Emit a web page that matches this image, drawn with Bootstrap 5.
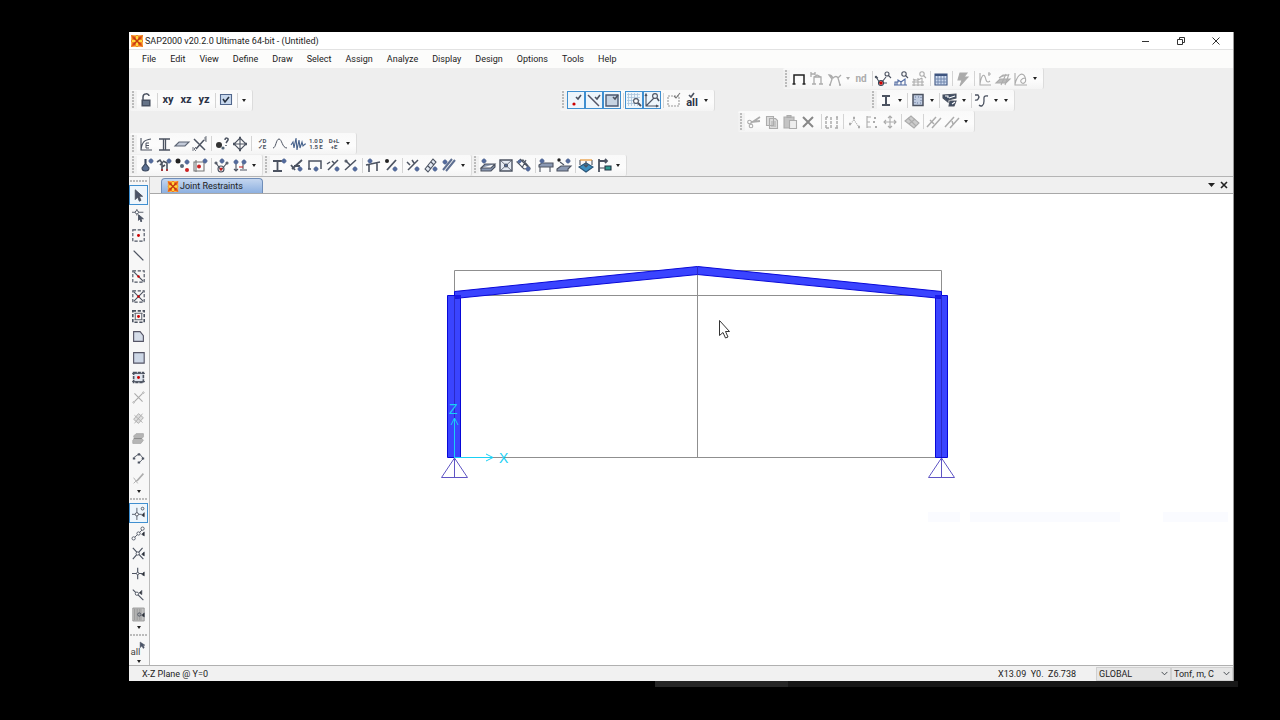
<!DOCTYPE html>
<html lang="en">
<head>
<meta charset="utf-8">
<meta name="viewport" content="width=device-width, initial-scale=1">
<title>SAP2000 v20.2.0 Ultimate 64-bit - (Untitled)</title>
<link href="https://cdn.jsdelivr.net/npm/bootstrap@5.3.0/dist/css/bootstrap.min.css" rel="stylesheet">
<script src="https://cdn.jsdelivr.net/npm/bootstrap@5.3.0/dist/js/bootstrap.bundle.min.js" defer></script>
<style>
  body { background:#000; color:#222; font:9px/16px Roboto, "Liberation Sans", sans-serif; }
  .desk { padding:32px 46px 39px 129px; }
  .app-window { background:#eee; border-right:1px solid #999; }
  .title-bar { height:18px; background:#fff; border-bottom:1px solid #e2e2e2; padding-left:2px; }
  .title-text { margin-left:2px; }
  .caption-btn { width:35px; height:17px; }
  .menu-strip { height:18px; background:#fcfcfb; padding-left:13px; gap:14px; }
  .menu-strip a { color:#222; text-decoration:none; }
  .tool-area { height:108px; background:#eee; }
  .strip { height:21px; padding-right:3px; background:linear-gradient(#f9f9f9,#fcfcfc 60%,#f4f4f4); border-right:1px solid #dcdcdc; border-radius:2px; }
  .strip button, .side button, .plain-btn { border:0; padding:0; background:none; color:#4c5361; }
  .strip button { width:18px; height:18px; display:flex; align-items:center; justify-content:center; border:1px solid transparent; flex:none; }
  .strip button.on, .side button.on { border:1px solid #3f8fd0; background:#eef6fc; }
  .strip button.more { width:10px; color:#222; }
  .strip button.thin { width:8px; }
  .strip button:disabled, .side button:disabled { color:#acacac; }
  .strip svg, .side svg { width:16px; height:16px; flex:none; overflow:visible; fill:none; stroke:currentColor; stroke-width:1.1; }
  .strip .more svg, .side .more svg { width:4px; height:3px; fill:currentColor; stroke:none; }
  .grip { width:7px; height:18px; flex:none; background:radial-gradient(circle at 2px 1px,#bbb 1px,transparent 1px) 1px 0/4px 3px repeat-y #f1f1f1; }
  .rule { width:1px; height:15px; margin:0 1px 0 2px; background:#d4d4d4; flex:none; }
  .strip .word { font:bold 11px/14px Roboto, sans-serif; color:#2c3346; }
  .strip .nd-text { font-size:10px; color:#999; }
  .mini { font:bold 6px/6px Roboto, sans-serif; }
  .check-over { height:5px !important; }
  .tiny-all { font:bold 11px/9px Roboto, sans-serif; color:#2c3346; }
  .r1 { margin-left:654px; } .r2a, .left-strip { margin-left:1px; } .r2b { margin-left:307px; } .r2c { margin-left:155px; } .r3 { margin-left:609px; }
  .work { border-top:1px solid #b4b4b4; }
  .side { width:21px; background:#f7f7f7; border-right:1px solid #bbb; }
  .side button { flex:1 1 0; min-height:0; width:19px; display:flex; align-items:center; justify-content:center; border:1px solid transparent; }
  .side button.more { flex:none; height:6px; color:#222; }
  .side svg { width:13px; height:13px; }
  .grip-h { height:8px; width:19px; flex:none; background:radial-gradient(circle at 1px 1px,#bbb 1px,transparent 1px) 1px 3px/3px 4px repeat-x; }
  .tab-row { height:17px; background:#f0f0f0; border-bottom:1px solid #a8a8a8; padding:0 5px 0 11px; gap:5px; }
  .doc-tab { width:102px; height:15px; padding:0 0 0 5px; border:1px solid #6f8db8; border-bottom:0; border-radius:4px 4px 0 0; background:linear-gradient(#c4d6ef,#8db0e0); color:#222; gap:1px; line-height:14px; }
  .canvas { min-height:0; background:#fff; }
  .canvas svg { width:100%; height:100%; display:block; }
  .status-strip { height:16px; background:#f1f1f1; border-top:1px solid #b0b0b0; padding-left:13px; }
  .status-strip .form-select { height:14px; padding:0 12px 0 2px; border:1px solid #d0d0d0; border-radius:0; font-size:9px; line-height:12px; color:#222; background-color:#e6e6e6; background-position:right 2px center; background-size:7px 7px; }
  .sel-sys { width:75px; } .sel-unit { width:62px; }
  .coords { margin-right:20px; white-space:pre; }
  .under-wrap { height:0; }
  .under { height:6px; margin:0 -4px 0 526px; background:linear-gradient(90deg,#262626 133px,#171717 133px); }
</style>
</head>
<body>
<svg class="d-none" aria-hidden="true">
  <symbol id="dn" viewBox="0 0 4 3"><path d="M0 0h4L2 3z"/></symbol>
  <symbol id="jt" viewBox="0 0 6 6"><path d="M3 0v6M0 3h6" stroke="#7c879c" stroke-width=".8"/><circle cx="3" cy="3" r="2.200" fill="#546b9c" stroke="none"/></symbol>
  <symbol id="logo" viewBox="0 0 12 12"><path fill="#fbb545" d="M0 0h12v12H0z"/><path fill="#e85f1c" d="M0 0l4 1.500L6 0l2 1.500L12 0l-1.500 4L12 6l-1.500 2 1.500 4-4-1.500L6 12l-2-1.500L0 12l1.500-4L0 6l1.500-2z"/><path stroke="#ffd93b" stroke-width="2.500" d="M6 1v10M1 6h10"/><path stroke="#c43a10" stroke-width="1.500" d="M2.500 2.500l7 7M9.500 2.500l-7 7"/></symbol>
</svg>

<div class="desk vh-100 d-flex flex-column">
<main class="app-window flex-grow-1 d-flex flex-column">
  <header class="title-bar d-flex align-items-center">
    <svg width="12" height="12" aria-hidden="true"><use href="#logo"/></svg>
    <span class="title-text me-auto">SAP2000 v20.2.0 Ultimate 64-bit - (Untitled)</span>
    <button class="plain-btn caption-btn" aria-label="Minimize"><svg width="8" height="8" stroke="#333"><path d="M0 4.500h7"/></svg></button>
    <button class="plain-btn caption-btn" aria-label="Restore"><svg width="8" height="8" fill="none" stroke="#333"><path d="M.5 2.500h5v5h-5zM2.500 2.500v-2h5v5h-2"/></svg></button>
    <button class="plain-btn caption-btn" aria-label="Close"><svg width="8" height="8" stroke="#333"><path d="M.5.5l7 7M7.500.5l-7 7"/></svg></button>
  </header>
  <nav class="menu-strip d-flex align-items-center" aria-label="Main menu">
    <a href="#">File</a><a href="#">Edit</a><a href="#">View</a><a href="#">Define</a><a href="#">Draw</a><a href="#">Select</a><a href="#">Assign</a><a href="#">Analyze</a><a href="#">Display</a><a href="#">Design</a><a href="#">Options</a><a href="#">Tools</a><a href="#">Help</a>
  </nav>

  <section class="tool-area d-flex flex-column" aria-label="Toolbars">
    <div class="flex-fill d-flex align-items-center">
      <div class="strip r1 d-flex align-items-center" role="toolbar" aria-label="Display">
        <span class="grip"></span>
        <button aria-label="Undeformed shape"><svg><path stroke="#222" stroke-width="1.500" d="M3 13V4h10v9M1.500 13h3M11.500 13h3"/></svg></button>
        <button disabled aria-label="Loads"><svg><path stroke-width="1.300" d="M5 13V6h7v7M3 13h4M10 13h4M2 1v5M2 3h4M6 1v3M5 6l3-2 4 2"/></svg></button>
        <button disabled aria-label="Deformed shape"><svg><path stroke-width="1.300" d="M3 14l2-6-3-4c2 0 3 1 4 3 2-2 4-2 5 0l3-3M11 7l2 7M2 14h2M12 14h2"/></svg></button>
        <button class="more thin" disabled aria-label="Shape options"><svg><use href="#dn"/></svg></button>
        <button disabled class="word nd-text">nd</button>
        <span class="rule"></span>
        <button aria-label="Joint reactions"><svg><path d="M1 6l4 6M11 6l-4 5M1 6l2 1M9 12h3"/><circle cx="6" cy="12" r="2.500" stroke="#345"/><circle cx="6" cy="12" r="1.200" fill="#c00" stroke="#c00"/><circle cx="12" cy="3" r="2"/><path d="M13.500 4.500L16 7"/><circle cx="1" cy="6" r=".7"/></svg></button>
        <button aria-label="Frame forces"><svg><path stroke="#4f69a0" d="M1 14h13M2 14v-3h3V9l3 2 4-3v6M4 11v3M8 11v3"/><circle cx="11" cy="3" r="2.200"/><path d="M12.500 4.500L15 7"/></svg></button>
        <button disabled aria-label="Shell forces"><svg><path d="M1 14h12M1 11h12M3 8v7M7 7v8M11 7v8M2 8c3 2 6 1 9-1"/><circle cx="11" cy="3" r="2.200"/><path d="M12.500 4.500L15 7"/></svg></button>
        <span class="rule"></span>
        <button aria-label="Tables"><svg><path fill="#cfdcf0" stroke="#3f5580" d="M2 3h12v11H2z"/><path fill="#3f5580" stroke="none" d="M2 3h12v2H2z"/><path stroke="#7086ad" stroke-width="1" d="M5 5v9M8 5v9M11 5v9M2 8h12M2 11h12"/></svg></button>
        <span class="rule"></span>
        <button disabled aria-label="Run"><svg><path fill="#aaa" d="M5 2h7L9 6h4l-8 9 2-6H3z"/></svg></button>
        <span class="rule"></span>
        <button disabled aria-label="Hinge results"><svg><path d="M3 2v12h11M3 13c2-12 5-10 6-4 1 3 3 2 4 1M11 3h3M12 1v4"/></svg></button>
        <button disabled aria-label="Response"><svg><path fill="#bbb" d="M1 12l4-4h10l-4 4zM4 7l4-3h6M6 14l5-11M10 14l4-11"/></svg></button>
        <button disabled aria-label="Function plot"><svg><path d="M2 2v12h12M2 13c3-11 8-12 10-7 2 5-1 7-3 6-3-2 0-5 3-5"/></svg></button>
        <button class="more" aria-label="More display tools"><svg><use href="#dn"/></svg></button>
      </div>
    </div>

    <div class="flex-fill d-flex align-items-center">
      <div class="strip r2a d-flex align-items-center" role="toolbar" aria-label="View">
        <span class="grip"></span>
        <button aria-label="Unlock model"><svg><path fill="#3f4d63" d="M4 8h8v6H4z"/><path stroke-width="1.500" d="M5 8V5c0-4 6-4 6-1"/><path stroke="#9fabbd" stroke-width=".8" d="M5 10h6M5 12h6"/></svg></button>
        <span class="rule"></span>
        <button class="word">xy</button><button class="word">xz</button><button class="word">yz</button>
        <span class="rule"></span>
        <button aria-label="Set display options"><svg><path fill="#c9d9ee" stroke="#50668c" d="M2.500 2.500h11v10h-11z"/><path stroke="#26303f" stroke-width="1.600" d="M5 7l2 3 4-5"/></svg></button>
        <span class="rule"></span>
        <button class="more" aria-label="More views"><svg><use href="#dn"/></svg></button>
      </div>
      <div class="strip r2b d-flex align-items-center" role="toolbar" aria-label="Snap and visibility">
        <span class="grip"></span>
        <button class="on" aria-label="Show joints"><svg><circle cx="6" cy="12" r="1.600" fill="#c00" stroke="none"/><path stroke-width="1.600" d="M8 5l2 2 3-4"/></svg></button>
        <button class="on" aria-label="Show frames"><svg><path stroke="#556" stroke-width="1.500" d="M2 3l11 11"/><path stroke-width="1.600" d="M9 5l2 2 3-4"/></svg></button>
        <button class="on" aria-label="Show shells"><svg><path fill="#c6d3e2" stroke="#4c5a72" stroke-width="1.400" d="M2 3h12v11H2z"/><path stroke-width="1.600" d="M9 5l2 2 3-4"/></svg></button>
        <span class="rule"></span>
        <button class="on" aria-label="Show grid"><svg><path stroke="#a9c4da" stroke-width=".8" d="M1 2.500h13M1 5.500h13M1 8.500h13M1 11.500h13M2.500 1v13M5.500 1v13M8.500 1v13M11.500 1v13"/><circle cx="10" cy="9" r="2.400" fill="#fff"/><path stroke-width="1.800" d="M12 11l3 3"/></svg></button>
        <button class="on" aria-label="Show axes"><svg><path d="M2 3v11h12M2 14l8-8M1 4l1-2 1 2M12 13l2 1-2 1"/><circle cx="11" cy="4" r="2.400"/><path stroke-width="1.600" d="M13 6l2 3"/></svg></button>
        <span class="rule"></span>
        <button aria-label="Show selection only"><svg><path stroke="#999" stroke-dasharray="2 1" d="M2 4h11v10H2z"/><path stroke="#777" d="M8 4l2 2 4-5"/></svg></button>
        <button class="flex-column" aria-label="Show all"><svg class="check-over"><path stroke-width="1.600" d="M5 2l2 2 3-4"/></svg><span class="tiny-all">all</span></button>
        <button class="more" aria-label="More visibility tools"><svg><use href="#dn"/></svg></button>
      </div>
      <div class="strip r2c d-flex align-items-center" role="toolbar" aria-label="Design">
        <span class="grip"></span>
        <button aria-label="Steel frame design"><svg><path stroke-width="2" d="M4 4h8M4 13h8M8 4v9"/></svg></button>
        <button class="more" aria-label="Steel options"><svg><use href="#dn"/></svg></button><span class="rule"></span>
        <button aria-label="Concrete frame design"><svg><path fill="#bfcbe0" stroke-width="1.500" d="M3 2.500h10v11H3z"/><path stroke="#6d7f9f" stroke-dasharray="1 2" d="M5 5h6v6H5z"/></svg></button>
        <button class="more" aria-label="Concrete options"><svg><use href="#dn"/></svg></button><span class="rule"></span>
        <button aria-label="Section design"><svg><path fill="#3f4d63" d="M1 3l13-1v4L6 8v2L1 6zM8 9h6l-2 5H7z"/><path stroke="#fff" d="M3 4h3v2M7 6l6-2M10 12l3-2"/></svg></button>
        <button class="more" aria-label="Section options"><svg><use href="#dn"/></svg></button><span class="rule"></span>
        <button aria-label="Cold-formed design"><svg><path stroke-width="1.300" d="M1 3h3c2 2 0 6-3 5M14 4c-5-1-4 2-4 5 0 5-3 6-5 4"/></svg></button>
        <button class="more" aria-label="Cold-formed options"><svg><use href="#dn"/></svg></button>
        <button class="more" aria-label="More design tools"><svg><use href="#dn"/></svg></button>
      </div>
    </div>

    <div class="flex-fill d-flex align-items-center">
      <div class="strip r3 d-flex align-items-center" role="toolbar" aria-label="Edit">
        <span class="grip"></span>
        <button disabled aria-label="Cut"><svg><path stroke-width="1.800" d="M14 3L5 9M14 7L5 8"/><circle cx="3.500" cy="8" r="1.800"/><circle cx="5" cy="12" r="1.800"/></svg></button>
        <button disabled aria-label="Copy"><svg><path fill="#ddd" d="M2.500 2.500h7v9h-7zM5.500 4.500h6l2 2v8h-8z"/><path d="M7 8h5M7 10h5M7 12h5"/></svg></button>
        <button disabled aria-label="Paste"><svg><path fill="#c4c4c4" d="M2 3h10v11H2zM5 1.500h4v2H5z"/><path fill="#eee" d="M7.500 6.500h7v8h-7z"/></svg></button>
        <button disabled aria-label="Delete"><svg><path stroke="#888" stroke-width="2" d="M3 3l10 10M13 3L3 13"/></svg></button>
        <span class="rule ms-1"></span>
        <button disabled aria-label="Replicate"><svg><path stroke-width="1.500" stroke-dasharray="3 1" d="M2 3v11M7 3v11M13 3v11M2 3h2M12 3h2M2 14h3M11 14h3"/></svg></button>
        <span class="rule"></span>
        <button disabled aria-label="Merge joints"><svg><path stroke-width="2.500" d="M7 4h2M3 10h2M12 13h2"/><path stroke-dasharray="1 1" d="M5 10l3-5M8 6l5 7"/></svg></button>
        <button disabled aria-label="Align joints"><svg><path d="M3 2v12M3 3h4M3 8h3M3 13h4"/><path stroke-width="2" d="M10 4h2M9 8h2M11 13h2"/></svg></button>
        <button disabled aria-label="Move"><svg><path d="M8 2v12M2 8h12M6 4l2-2 2 2M6 12l2 2 2-2M4 6L2 8l2 2M12 6l2 2-2 2"/></svg></button>
        <span class="rule"></span>
        <button disabled aria-label="Divide areas"><svg><path fill="#ccc" d="M1 7l6-5 8 7-5 5z"/><path d="M4 4l8 8M5 10l6-5"/></svg></button>
        <span class="rule"></span>
        <button disabled aria-label="Divide frames"><svg><path stroke-width="1.500" d="M1 13L10 3M6 14l9-10M4 6l4 4"/></svg></button>
        <button disabled aria-label="Join frames"><svg><path stroke-width="1.500" d="M1 13L10 3M6 14l9-10M8 7l1 3"/></svg></button>
        <button class="more" aria-label="More edit tools"><svg><use href="#dn"/></svg></button>
      </div>
    </div>

    <div class="flex-fill d-flex align-items-center">
      <div class="strip left-strip d-flex align-items-center" role="toolbar" aria-label="Define">
        <span class="grip"></span>
        <button aria-label="Materials"><svg><path d="M3 2v12h11M3 14C4 6 6 4 13 3"/><path stroke-width="1" d="M11 7H8v5h3M8 9.500h3"/></svg></button>
        <button aria-label="Frame sections"><svg><path fill="#c9d3e2" stroke-width="1.300" d="M3 3h11M3 14h11M7.500 3v11M9.500 3v11"/></svg></button>
        <button aria-label="Area sections"><svg><path fill="#c3cad8" stroke="#5d6574" d="M1 10l4-4h10l-4 4z"/></svg></button>
        <button aria-label="Link properties"><svg><path stroke-width="1.500" d="M2 3l11 11M12 4L4 13"/><path stroke-width=".8" d="M15 1h-2v4h2M13 3h2M1 11v4M4 11l-2 2 2 2"/></svg></button>
        <span class="rule"></span>
        <button aria-label="Groups"><svg><circle cx="5" cy="9" r="3" fill="#333" stroke="none"/><circle cx="9" cy="12" r="1.600" fill="#567" stroke="none"/><path stroke-width="1.500" d="M11 4c0-3 4-2 3 0l-2 3M12 9v1"/></svg></button>
        <button aria-label="Constraints"><svg><path d="M8 2l6 6-6 6-6-6zM8 2v12M2 8h12"/><path stroke-width="2.600" d="M7 2h2M7 14h2M1 8h2M13 8h2"/></svg></button>
        <span class="rule"></span>
        <button class="mini" aria-label="Load patterns">✓D<br>✓E</button>
        <button aria-label="Functions"><svg><path stroke-width="1" d="M1 12c3 0 3-9 6-9s3 9 8 9"/></svg></button>
        <button aria-label="Time history"><svg><path stroke="#47628c" d="M1 9l2-3 1 6 2-10 1 12 2-10 1 8 2-6 1 4 2-2h1"/></svg></button>
        <button class="mini" aria-label="Load cases">1.0 D<br>1.5 E</button>
        <button class="mini" aria-label="Load combinations">D+L<br>+E</button>
        <button class="more" aria-label="More define tools"><svg><use href="#dn"/></svg></button>
      </div>
    </div>

    <div class="flex-fill d-flex align-items-center">
      <div class="strip left-strip d-flex align-items-center" role="toolbar" aria-label="Assign joint">
        <span class="grip"></span>
        <button aria-label="Joint restraints"><svg><path fill="#5a6f92" stroke="#39465c" d="M7 2v5L4 11c0 4 7 4 7 0L8 7V2"/><use href="#jt" x="10" y="1" width="6" height="6"/></svg></button>
        <button aria-label="Joint springs"><svg><path stroke-width="1.600" d="M1 5l3-2 2 3v8M7 4l4 2v8M4 8l3-3M6 10l3-2"/><path stroke="#c00" d="M6 12v2M11 12v2"/><use href="#jt" x="10" y="1" width="6" height="6"/></svg></button>
        <button aria-label="Joint panel zones"><svg><circle cx="4" cy="4" r="2.500" fill="#222" stroke="none"/><circle cx="8" cy="9" r="2" fill="#567" stroke="none"/><circle cx="13" cy="13" r="2" fill="#c22" stroke="none"/><use href="#jt" x="10" y="2" width="6" height="6"/></svg></button>
        <button aria-label="Joint masses"><svg><path stroke="#777" d="M2 5h10v9H2zM4 3v12"/><circle cx="7" cy="9.500" r="2" fill="#c22" stroke="none"/><use href="#jt" x="10" y="1" width="6" height="6"/></svg></button>
        <span class="rule"></span>
        <button aria-label="Joint loads"><svg><path d="M2 6l5 7 6-7"/><circle cx="7" cy="12" r="3"/><circle cx="7" cy="12" r="1.500" fill="#c22" stroke="none"/><circle cx="2" cy="6" r="1"/><circle cx="13" cy="6" r="1"/><use href="#jt" x="5" y="1" width="6" height="6"/></svg></button>
        <button aria-label="Joint displacements"><svg><path d="M4 5v9M2 12l2 2 2-2M11 6v6M8 13h7"/><path stroke="#c22" d="M7 10h4"/><use href="#jt" x="1" y="2" width="6" height="6"/><use href="#jt" x="9" y="2" width="6" height="6"/></svg></button>
        <button class="more" aria-label="More joint tools"><svg><use href="#dn"/></svg></button>
      </div>
      <div class="strip d-flex align-items-center" role="toolbar" aria-label="Assign frame">
        <span class="grip"></span>
        <button aria-label="Frame section"><svg><path stroke-width="1.800" d="M2 4h9M2 14h9M6.500 4v10"/><use href="#jt" x="10" y="1" width="6" height="6"/></svg></button>
        <button aria-label="Property modifiers"><svg><path stroke-width="1.800" d="M3 12l10-9M2 8l4 5M5 9h6"/><use href="#jt" x="8" y="9" width="6" height="6"/></svg></button>
        <button aria-label="Frame releases"><svg><path stroke-width="1.500" d="M2 12V4h12v8M1 12h3"/><use href="#jt" x="6" y="9" width="6" height="6"/></svg></button>
        <button aria-label="Local axes"><svg><path stroke-width="1.500" d="M3 13L13 3M2 7l3-2M7 4l3 3"/><use href="#jt" x="9" y="9" width="6" height="6"/></svg></button>
        <button aria-label="End offsets"><svg><path stroke-width="1.500" d="M2 13L13 3M3 4l4 4"/><circle cx="3" cy="4" r="1"/><use href="#jt" x="9" y="9" width="6" height="6"/></svg></button>
        <span class="rule"></span>
        <button aria-label="Frame loads"><svg><path stroke-width="1.600" d="M1 8l14-3M4 7v8M12 6v8"/><use href="#jt" x="2" y="1" width="6" height="6"/></svg></button>
        <button aria-label="Insertion point"><svg><path stroke-width="1.800" d="M4 13l9-10"/><circle cx="4" cy="4" r="2" fill="#222" stroke="none"/><use href="#jt" x="9" y="9" width="6" height="6"/></svg></button>
        <span class="rule"></span>
        <button aria-label="Output stations"><svg><path stroke-width="1.500" d="M3 13L13 3M2 5l3 3M7 3l2 3"/><use href="#jt" x="9" y="9" width="6" height="6"/></svg></button>
        <button aria-label="Distributed loads"><svg><path fill="#e3e9f2" d="M2 12l8-10 3 3-8 10zM5 9l3 3M8 5l3 3"/><use href="#jt" x="9" y="9" width="6" height="6"/></svg></button>
        <button aria-label="Frame temperature"><svg><path stroke="#5f7092" stroke-width="2" d="M2 13L11 2M5 14L14 3"/><use href="#jt" x="1" y="2" width="6" height="6"/></svg></button>
        <button class="more" aria-label="More frame tools"><svg><use href="#dn"/></svg></button>
      </div>
      <div class="strip d-flex align-items-center" role="toolbar" aria-label="Assign area">
        <span class="grip"></span>
        <button aria-label="Area section"><svg><path fill="#8a98b2" d="M1 11l4-4h10l-4 4zM1 11v3h10l4-4V7"/><use href="#jt" x="1" y="1" width="6" height="6"/></svg></button>
        <button aria-label="Area mesh"><svg><path fill="#e6ebf3" stroke-width="1.400" d="M2 3h12v11H2z"/><path stroke-width=".8" d="M2 3l12 11M14 3L2 14"/><circle cx="8" cy="8.500" r="1.500" fill="#4f69a0"/></svg></button>
        <button aria-label="Area local axes"><svg><path d="M1 5l6-2 7 8-6 1zM4 2l8 8M10 3l-4 8"/><use href="#jt" x="9" y="9" width="6" height="6"/><use href="#jt" x="1" y="2" width="5" height="5"/></svg></button>
        <span class="rule"></span>
        <button aria-label="Area loads"><svg><path fill="#8a98b2" d="M1 8l3-2h11v4H1zM2 10v5M12 10v5"/><use href="#jt" x="1" y="1" width="6" height="6"/></svg></button>
        <button aria-label="Area springs"><svg><path fill="#8a98b2" d="M1 12l4-3h10l-3 3v2H1z"/><circle cx="3" cy="3" r="1.700" fill="#222" stroke="none"/><path d="M4 5l4 3"/><use href="#jt" x="9" y="1" width="6" height="6"/></svg></button>
        <span class="rule"></span>
        <button aria-label="Uniform area loads"><svg><path fill="#3c8fc0" stroke="#2a5578" d="M1 10l7-4 7 4-7 5z"/><path d="M2 3v5M14 3v5M8 4v6M6 8l2 2 2-2"/><path stroke="#e68a1e" d="M2 3h12"/></svg></button>
        <button aria-label="Wind loads"><svg><path stroke-width="1.800" d="M3 2v13M3 4h8M9 2l2 2-2 2"/><path fill="#2e9a8f" stroke="#234" d="M9 9h6v4H9z"/><path d="M3 11h6"/></svg></button>
        <button class="more" aria-label="More area tools"><svg><use href="#dn"/></svg></button>
      </div>
    </div>
  </section>

  <div class="work flex-grow-1 d-flex overflow-hidden">
    <aside class="side d-flex flex-column" aria-label="Draw and snap tools">
      <span class="grip-h"></span>
      <button class="on" aria-label="Pointer"><svg viewBox="0 0 16 16"><path fill="#4a5468" d="M4 1v12l3-3 2 5 2-1-2-5h4z"/></svg></button>
      <button aria-label="Reshape"><svg viewBox="0 0 16 16"><path d="M0 4h14M6 0v8"/><circle cx="6" cy="4" r="2" fill="#fff"/><path fill="#4a5468" d="M8 7v7l2-2 1 4 1-1-1-3h3z"/></svg></button>
      <button aria-label="Draw joint"><svg viewBox="0 0 16 16"><path stroke-width="1.400" stroke-dasharray="4 2" d="M1 1h14v14H1z"/><circle cx="8" cy="8" r="1.800" fill="#c00" stroke="none"/></svg></button>
      <button aria-label="Draw frame"><svg viewBox="0 0 16 16"><path stroke-width="1.600" d="M2 2l12 12"/></svg></button>
      <button aria-label="Quick draw frame"><svg viewBox="0 0 16 16"><path stroke-width="1.400" stroke-dasharray="4 2" d="M1 1h14v14H1z"/><path stroke-width="1.600" d="M2 2l12 12"/><circle cx="8" cy="8" r="1.500" fill="#c00" stroke="none"/></svg></button>
      <button aria-label="Quick draw braces"><svg viewBox="0 0 16 16"><path stroke-width="1.400" stroke-dasharray="4 2" d="M1 1h14v14H1z"/><path stroke-width="1.400" d="M2 2l12 12M14 2L2 14"/><circle cx="8" cy="8" r="1.500" fill="#c00" stroke="none"/></svg></button>
      <button aria-label="Quick draw beams"><svg viewBox="0 0 16 16"><path stroke-width="2" stroke-dasharray="4 2" d="M1 1h14v14H1z"/><path d="M3 4h10M3 12h10M4 4v8M12 4v8"/><circle cx="8" cy="8" r="1.800" fill="#c00" stroke="none"/></svg></button>
      <button aria-label="Draw polygon area"><svg viewBox="0 0 16 16"><path fill="#d5dde9" stroke="#556" stroke-width="1.400" d="M2 2h8l4 5v7H2z"/></svg></button>
      <button aria-label="Draw rectangle area"><svg viewBox="0 0 16 16"><path fill="#cdd7e6" stroke="#556" stroke-width="1.400" d="M2 2h13v13H2z"/></svg></button>
      <button aria-label="Quick draw area"><svg viewBox="0 0 16 16"><path stroke-width="2" stroke-dasharray="4 1" fill="#dfe5ee" d="M2 2h12v12H2z"/><path d="M0 3h16M0 13h16"/><circle cx="8" cy="8" r="1.800" fill="#c00" stroke="none"/></svg></button>
      <button disabled aria-label="Draw link"><svg viewBox="0 0 16 16"><path stroke-width="1.400" d="M3 3l10 10M13 3L3 13"/><circle cx="14" cy="2" r="1"/><circle cx="2" cy="14" r="1"/></svg></button>
      <button disabled aria-label="Draw solid"><svg viewBox="0 0 16 16"><path fill="#ddd" d="M2 9l6-7 6 5-6 7zM3 4l10 9M13 2L3 14"/></svg></button>
      <button disabled aria-label="Draw wall"><svg viewBox="0 0 16 16"><path fill="#b5b5b5" d="M2 5l3-3h9v4l-2 2 2 2-3 4H1v-4l2-2z"/><path stroke="#888" d="M2 8h10"/></svg></button>
      <button aria-label="Draw polyline"><svg viewBox="0 0 16 16"><path d="M2 7l7-5 5 6-5 5"/><path stroke-width="2.500" d="M1 8h3M7 3h3M12 8h3M7 13h3"/></svg></button>
      <button disabled aria-label="Draw reference line"><svg viewBox="0 0 16 16"><path stroke-width="2" d="M14 2L6 11"/><path d="M2 7l5 7M2 14l4-4"/></svg></button>
      <button class="more" aria-label="More draw tools"><svg><use href="#dn"/></svg></button>
      <span class="grip-h"></span>
      <button class="on" aria-label="Snap to joints"><svg viewBox="0 0 16 16"><path d="M0 9h12M6 1v15"/><circle cx="6" cy="9" r="2" fill="#fff"/><circle cx="13" cy="2" r="1.700"/><path fill="#222" d="M15 7v5l-3-2z"/></svg></button>
      <button aria-label="Snap to ends"><svg viewBox="0 0 16 16"><path d="M2 14L14 2"/><circle cx="2" cy="14" r="2" fill="#fff"/><circle cx="8" cy="8" r="2" fill="#fff"/><circle cx="13" cy="2" r="2" fill="#fff"/><path fill="#222" d="M15 6v5l-3-2z"/></svg></button>
      <button aria-label="Snap to intersections"><svg viewBox="0 0 16 16"><path stroke-width="1.400" d="M1 1l13 14M13 1L1 15"/><circle cx="7" cy="8" r="2" fill="#fff"/><path fill="#222" d="M15 6v5l-3-2z"/></svg></button>
      <button aria-label="Snap to perpendicular"><svg viewBox="0 0 16 16"><path stroke-width="1.400" d="M0 8h13M7 1v14"/><circle cx="7" cy="8" r="1.500" fill="#fff"/><path fill="#222" d="M15 6v5l-3-2z"/></svg></button>
      <button aria-label="Snap to lines"><svg viewBox="0 0 16 16"><path stroke-width="1.400" d="M1 2l13 13"/><circle cx="6" cy="7" r="2" fill="#fff"/><path fill="#222" d="M12 3v5L9 6z"/></svg></button>
      <button aria-label="Snap to fine grid"><svg viewBox="0 0 16 16"><path fill="#c4c4c4" stroke="#909090" stroke-width="1" d="M1 0h14v16H1zM3 1v14M5 1v14M7 1v14M9 1v14M11 1v14"/><circle cx="9" cy="8" r="2"/><path fill="#222" d="M15 6v5l-3-2z"/></svg></button>
      <button class="more" aria-label="More snap tools"><svg><use href="#dn"/></svg></button>
      <span class="grip-h"></span>
      <button aria-label="Select all"><svg viewBox="0 0 16 16"><text x="-2" y="16" font-size="12" font-family="Roboto, sans-serif" fill="#444" stroke="none">all</text><path fill="#4a5468" stroke-width=".6" d="M10 0v7l2-2 2 3 1-1-1-3h2z"/></svg></button>
      <button class="more" aria-label="More select tools"><svg><use href="#dn"/></svg></button>
    </aside>

    <section class="flex-grow-1 d-flex flex-column" aria-label="Model window">
      <div class="tab-row d-flex align-items-end">
        <button class="doc-tab d-flex align-items-center me-auto"><svg width="12" height="11" viewBox="0 0 12 12" aria-hidden="true"><use href="#logo"/></svg><span>Joint Restraints</span></button>
        <button class="plain-btn d-flex align-self-center" aria-label="Window list"><svg width="7" height="4"><path fill="#222" d="M0 0h7L3.500 4z"/></svg></button>
        <button class="plain-btn d-flex align-self-center" aria-label="Close tab"><svg width="8" height="8"><path stroke="#222" stroke-width="1.600" d="M1 1l6 6M7 1L1 7"/></svg></button>
      </div>
      <div class="canvas flex-grow-1">
        <svg viewBox="150 194 1083 470" preserveAspectRatio="xMidYMin meet" role="img" aria-label="Portal frame with pinned supports">
          <path fill="#fafbff" d="M928 512h32v10h-32zM970 512h150v10H970zM1163 512h65v10h-65z"/>
          <path fill="none" stroke="#8f8f8f" d="M493 457.500h448.500v-187h-487v187M454.500 295.500h487M697.500 270.500v187"/>
          <g fill="#3a44ff" stroke="#0808d8">
            <path d="M447.500 295.500h13v162h-13zM935.500 295.500h12v162h-12z"/>
            <path d="M454.500 291.500L697.500 266.500 941.500 291.500v7L697.500 274.500 454.500 298.500z"/>
          </g>
          <path fill="#1818e8" d="M455 295h6v3l-6 1zM935 295h7v4l-7-1z"/>
          <path fill="none" stroke="#2a2ac8" d="M454.500 296v161M941.500 296v161M697.500 267v8"/>
          <path fill="none" stroke="#5f55c4" d="M454.500 458l-13 19.500h26zM454.500 458v19M941.500 458l-13 19.500h26zM941.500 458v19"/>
          <path fill="none" stroke="#19d0f5" d="M454.500 457v-39M451 425l3.500-7 3.500 7"/>
          <path fill="none" stroke="#19d0f5" d="M454 457.500h39M486 454l7 3.500-7 3.500"/>
          <g fill="#19d0f5" font-family="Liberation Sans, sans-serif" font-size="14"><text x="449" y="414">Z</text><text x="499" y="463">X</text></g>
          <path fill="#fff" stroke="#333" d="M719.500 320.500v15l3.500-3 2.500 5.500 2.500-1-2.500-5.500h4z"/>
        </svg>
      </div>
    </section>
  </div>

  <footer class="status-strip d-flex align-items-center">
    <span class="me-auto">X-Z Plane @ Y=0</span>
    <span class="coords">X13.09  Y0.  Z6.738</span>
    <select class="form-select sel-sys" aria-label="Coordinate system"><option>GLOBAL</option></select>
    <select class="form-select sel-unit" aria-label="Units"><option>Tonf, m, C</option></select>
  </footer>
</main>
<div class="under-wrap"><div class="under"></div></div>
</div>
</body>
</html>
